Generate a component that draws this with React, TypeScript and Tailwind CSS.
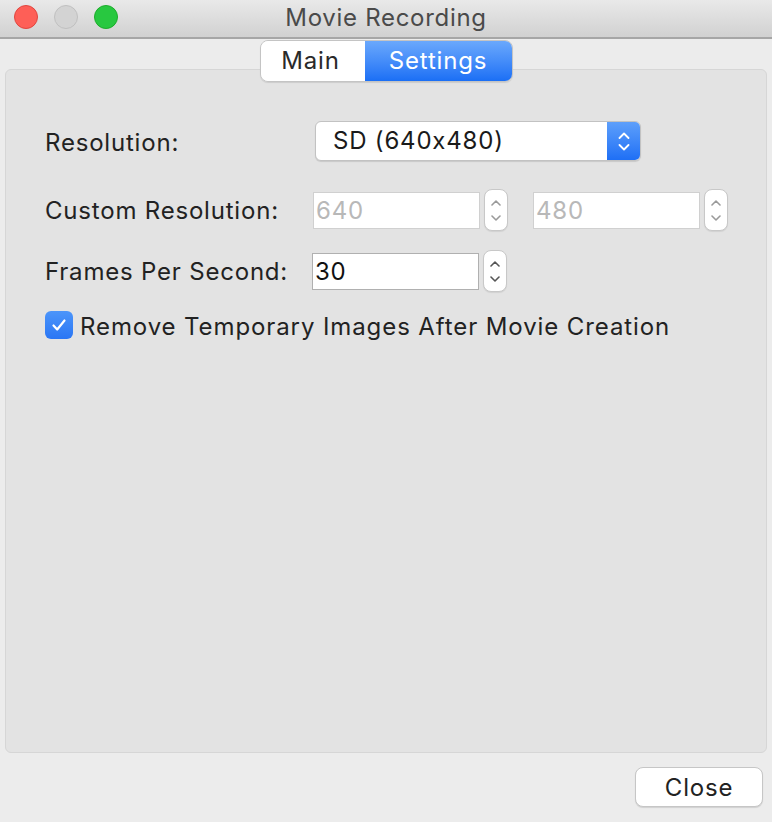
import React from "react";

function Stepper({ disabled }: { disabled?: boolean }) {
  const c = disabled ? "#9a9a9a" : "#555";
  return (
    <div className="w-[24px] h-[42px] rounded-[8px] bg-white border border-[#c8c8c8] shadow-[0_1px_1px_rgba(0,0,0,0.08)] flex flex-col items-center justify-center gap-[9px]">
      <svg width="10" height="6" viewBox="0 0 10 6">
        <path d="M1 5 L5 1 L9 5" fill="none" stroke={c} strokeWidth="1.6" strokeLinecap="round" strokeLinejoin="round" />
      </svg>
      <svg width="10" height="6" viewBox="0 0 10 6">
        <path d="M1 1 L5 5 L9 1" fill="none" stroke={c} strokeWidth="1.6" strokeLinecap="round" strokeLinejoin="round" />
      </svg>
    </div>
  );
}

function NumberField({ value, disabled }: { value: string; disabled?: boolean }) {
  return (
    <div className="flex items-center gap-[4px]">
      <div
        className={`w-[167px] h-[37px] bg-white border flex items-center pl-[2px] pt-[1px] ${
          disabled ? "border-[#d0d0d0] text-[#b8b8b8]" : "border-[#b0b0b0] text-[#111]"
        }`}
      >
        {value}
      </div>
      <Stepper disabled={disabled} />
    </div>
  );
}

export default function App() {
  return (
    <div className="w-[772px] h-[822px] flex flex-col bg-[#ececec] overflow-hidden font-['Inter','Noto_Sans',sans-serif] [font-feature-settings:'calt'_0] tracking-[0.8px]">
      {/* title bar */}
      <div className="relative h-[39px] shrink-0 bg-gradient-to-b from-[#e9e9e9] to-[#d1d1d1] border-b-[2px] border-[#a6a6a6] flex items-center justify-center">
        <div className="absolute left-[14px] top-[5px] flex gap-[16px]">
          <div className="w-[24px] h-[24px] rounded-full bg-[#fe5f57] border border-[#e1463f]" />
          <div className="w-[24px] h-[24px] rounded-full bg-[#d3d3d3] border border-[#c0c0c0]" />
          <div className="w-[24px] h-[24px] rounded-full bg-[#28c840] border border-[#1dad2b]" />
        </div>
        <span className="text-[24px] text-[#4a4a4a] -mt-[2px] tracking-[0.7px]">Movie Recording</span>
      </div>

      {/* body */}
      <div className="flex-1 flex flex-col px-[5px]">
        <div className="relative z-10 flex justify-center mt-[1px] h-[42px]">
          <div className="flex h-[42px] rounded-[8px] border border-[#c4c4c4] overflow-hidden shadow-[0_1px_1px_rgba(0,0,0,0.1)] text-[24px]">
            <div className="w-[104px] bg-white flex items-center justify-center text-[#2a2a2a] pr-[4px]">Main</div>
            <div className="w-[147px] bg-gradient-to-b from-[#6aa8fc] to-[#1a6ff5] flex items-center justify-center text-white">
              Settings
            </div>
          </div>
        </div>

        <div className="-mt-[13px] h-[684px] rounded-[6px] bg-[#e3e3e3] border border-[#d6d6d6] flex flex-col pl-[39px] text-[24px] text-[#222]">
          {/* Resolution */}
          <div className="mt-[51px] h-[40px] flex items-center">
            <span className="w-[270px] mt-[4px]">Resolution:</span>
            <div className="w-[326px] h-[40px] rounded-[6px] bg-white border border-[#c2c2c2] shadow-[0_1px_1px_rgba(0,0,0,0.12)] flex items-center overflow-hidden">
              <span className="flex-1 pl-[17px] text-[#1a1a1a]">SD (640x480)</span>
              <div className="w-[33px] h-full bg-gradient-to-b from-[#5d9ffb] to-[#1e6ff5] flex flex-col items-center justify-center gap-[5px]">
                <svg width="12" height="7" viewBox="0 0 12 7">
                  <path d="M1.5 6 L6 1.5 L10.5 6" fill="none" stroke="#fff" strokeWidth="1.8" strokeLinecap="round" strokeLinejoin="round" />
                </svg>
                <svg width="12" height="7" viewBox="0 0 12 7">
                  <path d="M1.5 1 L6 5.5 L10.5 1" fill="none" stroke="#fff" strokeWidth="1.8" strokeLinecap="round" strokeLinejoin="round" />
                </svg>
              </div>
            </div>
          </div>

          {/* Custom Resolution */}
          <div className="mt-[28px] h-[42px] flex items-center">
            <span className="w-[268px] mt-[2px]">Custom Resolution:</span>
            <NumberField value="640" disabled />
            <div className="w-[25px]" />
            <NumberField value="480" disabled />
          </div>

          {/* FPS */}
          <div className="mt-[19px] h-[42px] flex items-center">
            <span className="w-[267px] mt-[2px]">Frames Per Second:</span>
            <NumberField value="30" />
          </div>

          {/* checkbox */}
          <div className="mt-[19px] h-[28px] flex items-center gap-[7px]">
            <div className="w-[28px] h-[28px] rounded-[6px] bg-gradient-to-b from-[#4c95fa] to-[#2a76f4] flex items-center justify-center">
              <svg width="16" height="14" viewBox="0 0 16 14">
                <path d="M2.5 7.5 L6.2 11.5 L13.5 2.5" fill="none" stroke="#fff" strokeWidth="2.2" strokeLinecap="round" strokeLinejoin="round" />
              </svg>
            </div>
            <span className="mt-[3px] tracking-[0.9px]">Remove Temporary Images After Movie Creation</span>
          </div>
        </div>

        {/* footer */}
        <div className="flex justify-end pr-[4px] mt-[14px]">
          <button className="w-[128px] h-[40px] rounded-[8px] bg-white border border-[#c6c6c6] shadow-[0_1px_1px_rgba(0,0,0,0.12)] text-[24px] text-[#222] pt-[1px]">
            Close
          </button>
        </div>
      </div>
    </div>
  );
}
